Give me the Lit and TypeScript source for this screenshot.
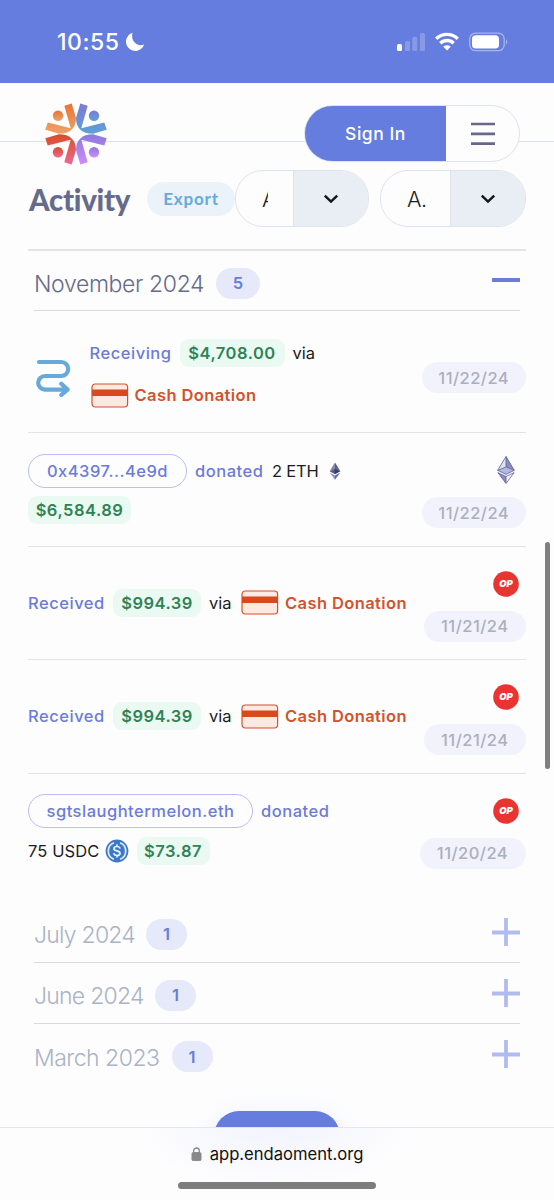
import { LitElement, html, css, svg } from "lit";
import { customElement } from "lit/decorators.js";

const petal = (fill: string, transform: string) => svg`
  <g fill=${fill} transform=${transform}>
    <path d="M.3 26.8L14 30.8C25 30.8 31 25 31 15L26.7 .5L19.3 2.8L25.7 25.2L2.7 19.5Z"/>
    <circle cx="13" cy="12.8" r="5.2"/>
  </g>`;

const logo = html`<svg class="logo" width="62" height="62" viewBox="0 0 62 62">
  <defs>
    <linearGradient id="ga" x1="0" y1="0" x2="0" y2="1"><stop offset="0" stop-color="#e87436"/><stop offset="1" stop-color="#eea368"/></linearGradient>
    <linearGradient id="gb" x1="0" y1="0" x2="0" y2="1"><stop offset="0" stop-color="#7f78d6"/><stop offset="1" stop-color="#5ba3d7"/></linearGradient>
    <linearGradient id="gc" x1="0" y1="1" x2="0" y2="0"><stop offset="0" stop-color="#d84d27"/><stop offset="1" stop-color="#ee6993"/></linearGradient>
    <linearGradient id="gd" x1="0" y1="1" x2="0" y2="0"><stop offset="0" stop-color="#8c79dc"/><stop offset="1" stop-color="#cf8cfb"/></linearGradient>
  </defs>
  ${petal("url(#ga)", "")}
  ${petal("url(#gb)", "translate(62 0) scale(-1 1)")}
  ${petal("url(#gc)", "translate(0 62) scale(1 -1)")}
  ${petal("url(#gd)", "translate(62 62) scale(-1 -1)")}
</svg>`;

const chevron = html`<svg width="16" height="10" viewBox="0 0 16 10"><path d="M1.8 1.6L8 7.6L14.2 1.6" fill="none" stroke="#15161c" stroke-width="2.5"/></svg>`;

const card = html`<svg class="card" width="38" height="25" viewBox="0 0 38 25">
  <rect x="1" y="1" width="35.6" height="23" rx="3.2" fill="#fbe9e2" stroke="#d6502a" stroke-width="1.2"/>
  <path d="M1 6.6H36.6V13H1Z" fill="#d8491f"/></svg>`;

const op = html`<svg class="op" width="26" height="26" viewBox="0 0 26 26"><circle cx="13" cy="13" r="12.8" fill="#ea3431"/>
  <text x="13" y="16.4" text-anchor="middle" class="optext">OP</text></svg>`;

const ethBig = html`<svg class="eth" width="18" height="28" viewBox="0 0 18 28">
  <path d="M9 .5L.7 14.3L9 11Z" fill="#dfe1f5"/><path d="M9 .5L17.3 14.3L9 11Z" fill="#8a8cc0"/>
  <path d="M.7 14.3L9 11L17.3 14.3L9 18.4Z" fill="#b4b7e2"/>
  <path d="M.9 16.6L9 20.6V27.5Z" fill="#8a8cc0"/><path d="M17.1 16.6L9 20.6V27.5Z" fill="#f4f5fd"/>
  <path d="M9 .5L.7 14.3L9 18.4L17.3 14.3ZM9 .5V11M.7 14.3L9 11L17.3 14.3M.9 16.6L9 20.6L17.1 16.6L9 27.5ZM9 20.6V27" fill="none" stroke="#5c5f96" stroke-width=".8" stroke-linejoin="round"/></svg>`;

const ethSmall = html`<svg class="eths" width="12" height="18" viewBox="0 0 12 18">
  <path d="M6 .4L.6 9.2L6 7Z" fill="#8487a8"/><path d="M6 .4L11.4 9.2L6 7Z" fill="#5b5f8b"/>
  <path d="M.6 9.2L6 6.8V12.3Z" fill="#565a86"/><path d="M11.4 9.2L6 6.8V12.3Z" fill="#383c6c"/>
  <path d="M.7 10.6L6 13.6V17.8Z" fill="#9092bb"/><path d="M11.3 10.6L6 13.6V17.8Z" fill="#6669a0"/></svg>`;

const usdc = html`<svg class="usdc" width="24" height="24" viewBox="0 0 24 24"><circle cx="12" cy="12" r="11.4" fill="#3f78c6"/>
  <path d="M8.9 3.8A8.8 8.8 0 0 0 8.9 20.2M15.1 3.8A8.8 8.8 0 0 1 15.1 20.2" fill="none" stroke="#d5eefa" stroke-width="1.7"/>
  <path d="M15 9.7C14.8 8.1 13.6 7.5 12 7.5C10.2 7.5 9 8.3 9 9.7C9 12.8 15 11.1 15 14.2C15 15.7 13.7 16.5 12 16.5C10.2 16.5 9 15.8 8.8 14.2M12 5.5V7.5M12 16.5V18.5" fill="none" stroke="#e5f5fc" stroke-width="1.7"/></svg>`;

const route = html`<svg class="route" width="36" height="38" viewBox="0 0 36 38"><path d="M4 3H26.2A7 7 0 0 1 26.2 17H10A6.6 6.6 0 0 0 10 30.6H32M26.3 24.8L32.6 30.6L26.3 36" fill="none" stroke="#66a9da" stroke-width="4.2" stroke-linecap="round" stroke-linejoin="round"/></svg>`;

const months = [
  { name: "July 2024", cls: "jul" },
  { name: "June 2024", cls: "jun" },
  { name: "March 2023", cls: "mar" },
];

@customElement("app-root")
export class AppRoot extends LitElement {
  static styles = css`
    :host { display: block; height: 1200px; position: relative; overflow: hidden; background: #fdfdfe; font-family: Inter, sans-serif; font-size: 16.5px; color: #1b1c22; }
    * { box-sizing: border-box; }
    svg { display: block; flex: none; }
    span { white-space: nowrap; }
    .page { display: flex; flex-direction: column; height: 1200px; }
    .status { flex: none; height: 83px; background: #667de0; color: #fff; display: flex; padding: 0 45px 0 57px; align-items: center; }
    .time { font-size: 23px; font-weight: 500; width: 68px; letter-spacing: .55px; }
    .signals { margin-left: auto; }
    .header { flex: none; height: 87px; padding: 19px 34px 0 45px; display: flex; justify-content: space-between; background: linear-gradient(#dde1ec, #dde1ec) 0 58px / 100% 1px no-repeat; }
    .logo { margin-top: 1px; }
    .nav { display: flex; width: 216px; height: 57px; border-radius: 29px; border: 1px solid #dfe3ea; background: #fdfdfe; overflow: hidden; margin: 3px 0 0; }
    .signin { width: 142px; margin: -1px 0 -1px -1px; border: 1px solid #4b7fd2; border-right: 0; border-radius: 29px 0 0 29px; background: #667de0; color: #fff; font-weight: 500; font-size: 17.5px; letter-spacing: .55px; display: grid; place-items: center; }
    .menu { flex: 1; display: grid; place-items: center; }
    .filters { flex: none; height: 57px; padding: 0 28px 0 29px; display: flex; align-items: center; }
    h1 { margin: 0; width: 118px; padding-top: 2px; font: 900 29.5px Lato, sans-serif; color: #676b8b; letter-spacing: -.3px; }
    .export { width: 88px; height: 34px; border-radius: 17px; background: #ebf2f9; color: #65abdb; font: 700 17px Lato, sans-serif; letter-spacing: .8px; display: grid; place-items: center; }
    .select { width: 134px; height: 57px; border: 1px solid #dfe3ea; border-radius: 28px; display: flex; overflow: hidden; background: #fdfdfe; }
    .second { width: 146px; margin-left: 11px; }
    .value { flex: 1; display: flex; align-items: center; font-size: 21.5px; font-weight: 350; }
    .clip { width: 6px; margin-left: 26px; overflow: hidden; }
    .full { margin-left: 26px; letter-spacing: -.4px; }
    .drop { width: 75px; border-left: 1px solid #dfe3ea; background: #e9edf4; display: grid; place-items: center; }
    .list { margin: 22px 28.5px 0 28px; border-top: 2px solid #e3e4e8; }
    .month { height: 61px; margin: 0 6px; border-bottom: 1px solid #d9dbe2; display: flex; align-items: center; padding-top: 5px; }
    .first { height: 60px; }
    .name { font-size: 23px; font-weight: 300; color: #676b8b; margin-right: 12px; padding-top: 2px; }
    .nov { letter-spacing: -.36px; width: 170px; }
    .dim { color: #abb3c6; }
    .jul { width: 100px; letter-spacing: -.75px; } .jun { width: 109px; letter-spacing: -.75px; } .mar { width: 125.5px; letter-spacing: -.5px; }
    .count { width: 41px; height: 31px; border-radius: 16px; background: #e6e9f9; color: #667de0; font-weight: 600; display: grid; place-items: center; }
    .five { width: 44px; }
    .sign { margin: -5px 0 0 auto; }
    .last { border-bottom: 0; }
    .row { display: flex; justify-content: space-between; border-bottom: 1.5px solid #e1e3e7; height: 113.5px; }
    .r1 { height: 122px; }
    .r5 { height: 128px; border-bottom: 0; }
    .body { display: flex; flex-direction: column; }
    .line { display: flex; align-items: center; height: 34px; }
    .side { display: flex; flex-direction: column; align-items: flex-end; }
    .verb { color: #6b7bdb; font-weight: 500; letter-spacing: .52px; }
    .amt { background: #ebf9f3; color: #2f8355; font-weight: 600; height: 28px; border-radius: 9px; display: grid; place-items: center; letter-spacing: .5px; margin: 0 8px; }
    .cash { color: #d2532c; font-weight: 600; letter-spacing: .4px; }
    .who { height: 34px; border: 1.5px solid #b9bff0; border-radius: 17px; color: #6b7bdb; font-weight: 500; display: grid; place-items: center; margin-right: 8px; letter-spacing: .5px; }
    .date { height: 31px; border-radius: 16px; background: #f2f2fc; color: #abafbf; font-weight: 500; display: grid; place-items: center; letter-spacing: .48px; }
    .optext { font: italic 900 9.5px Inter, sans-serif; fill: #fff; }
    .route { margin: 47.5px 18.5px 0 7px; }
    .c1 { padding-top: 25px; margin-right: auto; }
    .l2 { margin-top: 8px; }
    .d22 { width: 103.5px; } .d21 { width: 101.5px; } .d20 { width: 106px; }
    .op { margin: 24px 6.5px 14px 0; }
    .eth { margin: 23px 10.5px 13px 0; }
    .card { margin: 0 6px 0 9px; }
    .c1 .card { margin-left: 1px; }
    .usdc { margin-right: 0; }
    .mid { padding-top: 39px; }
    .top { padding-top: 20.5px; }
    .more { position: absolute; left: 214px; top: 1111px; width: 126px; height: 56px; border-radius: 25px; background: #667de0; box-shadow: 0 6px 24px rgba(102,125,224,.14); }
    .footer { position: absolute; left: 0; right: 0; top: 1127px; height: 73px; border-top: 1.5px solid #e6e6e9; background: radial-gradient(ellipse 140px 60px at 277px 0, #f3f4fd, #fdfdfe); display: flex; flex-direction: column; align-items: center; }
    .url { display: flex; align-items: center; height: 52px; gap: 8px; font-size: 16.6px; color: #111; }
    .home { width: 198px; height: 7px; border-radius: 4px; background: #7d7d7d; margin-top: 1.5px; }
    .scroll { position: absolute; left: 545px; top: 542px; width: 5px; height: 227px; border-radius: 3px; background: #7f7f7f; }
  `;

  received() {
    return html`<div class="row"><div class="body mid"><div class="line">
      <span class="verb" style="width:77px">Received</span><span class="amt" style="width:88px">$994.39</span><span class="via" style="width:23px">via</span>${card}<span class="cash">Cash Donation</span>
    </div></div><div class="side">${op}<span class="date d21">11/21/24</span></div></div>`;
  }

  render() {
    return html`<div class="page">
      <div class="status">
        <span class="time">10:55</span>
        <svg width="20" height="20" viewBox="0 0 20 20"><path d="M7.6 .7A9.3 9.3 0 1 0 19.1 12.6C12.4 15.4 5 8.4 7.6 .7Z" fill="#fff"/></svg>
        <svg class="signals" width="112" height="20" viewBox="0 0 112 20" fill="#fff">
          <rect x="0" y="12" width="5" height="7" rx="1.5"/>
          <g opacity=".22"><rect x="8" y="9" width="5" height="10" rx="1.5"/><rect x="15.3" y="5" width="5" height="14" rx="1.5"/><rect x="23" y="1" width="5" height="18" rx="1.5"/></g>
          <g fill="none" stroke="#fff" stroke-width="3.3"><path d="M39.2 6.8A15.5 15.5 0 0 1 60.8 6.8"/><path d="M43.3 11.2A9.6 9.6 0 0 1 56.7 11.2"/></g><path d="M46.3 14.7A5.4 5.4 0 0 1 53.7 14.7L50 18.6Z"/>
          <rect x="72.7" y="1.1" width="34.5" height="17.6" rx="5.8" fill="none" stroke="#fff" stroke-opacity=".42" stroke-width="1.3"/><rect x="75" y="3.2" width="27" height="13.4" rx="3.8"/><path d="M109 7.2A3.4 3.4 0 0 1 109 12.6Z" opacity=".45"/>
        </svg>
      </div>
      <div class="header">${logo}
        <div class="nav"><span class="signin">Sign In</span><span class="menu"><svg width="24" height="24" viewBox="0 0 24 24"><path d="M0 2H24M0 11.8H24M0 21.6H24" stroke="#676889" stroke-width="2.7"/></svg></span></div>
      </div>
      <div class="filters"><h1>Activity</h1><span class="export">Export</span>
        <div class="select"><span class="value"><span class="clip">A</span></span><span class="drop">${chevron}</span></div>
        <div class="select second"><span class="value"><span class="full">A.</span></span><span class="drop">${chevron}</span></div>
      </div>
      <div class="list">
        <div class="month first"><span class="name nov">November 2024</span><span class="count five">5</span><svg class="sign" width="28" height="28" viewBox="0 0 28 28"><path d="M0 13H28" stroke="#6b7bd8" stroke-width="4"/></svg></div>
        <div class="row r1">${route}<div class="body c1">
          <div class="line"><span class="verb" style="width:82px">Receiving</span><span class="amt" style="width:105px">$4,708.00</span><span>via</span></div>
          <div class="line l2">${card}<span class="cash">Cash Donation</span></div></div>
          <div class="side"><span class="date d22" style="margin-top:51px">11/22/24</span></div></div>
        <div class="row"><div class="body top">
          <div class="line"><span class="who" style="width:159px">0x4397...4e9d</span><span class="verb" style="width:69px">donated</span><span style="margin:0 10px 0 8px;width:47px;letter-spacing:-.2px">2 ETH</span>${ethSmall}</div>
          <div class="line" style="height:45px"><span class="amt" style="width:103px;margin-left:0">$6,584.89</span></div></div>
          <div class="side">${ethBig}<span class="date d22">11/22/24</span></div></div>
        ${this.received()}${this.received()}
        <div class="row r5"><div class="body top">
          <div class="line"><span class="who" style="width:225px">sgtslaughtermelon.eth</span><span class="verb">donated</span></div>
          <div class="line" style="height:45px"><span style="width:76.5px;letter-spacing:.1px">75 USDC</span>${usdc}<span class="amt" style="width:73px">$73.87</span></div></div>
          <div class="side">${op}<span class="date d20">11/20/24</span></div></div>
        ${months.map((m, i) => html`<div class="month ${i === 2 ? "last" : ""}"><span class="name dim ${m.cls}">${m.name}</span><span class="count">1</span>
          <svg class="sign" width="28" height="28" viewBox="0 0 28 28"><path d="M0 14.5H28M14 0V28" stroke="#b2bbf0" stroke-width="3.8"/></svg></div>`)}
      </div>
      <div class="more"></div>
      <div class="footer"><div class="url"><svg width="11" height="14" viewBox="0 0 11 14"><rect x="1" y="5.6" width="9" height="8" rx="1.2" fill="#898989" stroke="#898989"/><path d="M2.7 6V3.8A2.8 2.8 0 0 1 8.3 3.8V6" fill="none" stroke="#898989" stroke-width="1.3"/></svg><span>app.endaoment.org</span></div><div class="home"></div></div>
      <div class="scroll"></div>
    </div>`;
  }
}
